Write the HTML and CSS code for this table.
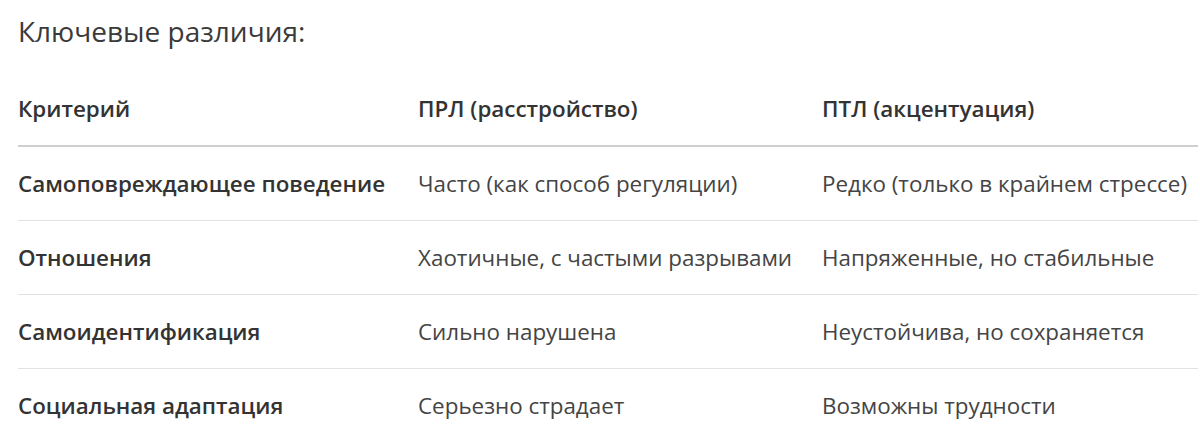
FILE: index.html
```html
<!DOCTYPE html>
<html lang="ru">
<head>
<meta charset="utf-8">
<link rel="stylesheet" href="styles.css">
</head>
<body>
<main class="content">
  <h3 class="title">Ключевые различия:</h3>
  <table class="diff">
    <thead>
      <tr><th>Критерий</th><th>ПРЛ (расстройство)</th><th>ПТЛ (акцентуация)</th></tr>
    </thead>
    <tbody>
      <tr><td class="crit">Самоповреждающее поведение</td><td>Часто (как способ регуляции)</td><td>Редко (только в крайнем стрессе)</td></tr>
      <tr><td class="crit">Отношения</td><td>Хаотичные, с частыми разрывами</td><td>Напряженные, но стабильные</td></tr>
      <tr><td class="crit">Самоидентификация</td><td>Сильно нарушена</td><td>Неустойчива, но сохраняется</td></tr>
      <tr><td class="crit">Социальная адаптация</td><td>Серьезно страдает</td><td>Возможны трудности</td></tr>
    </tbody>
  </table>
</main>
</body>
</html>
```
FILE: styles.css
```css
html, body {
  margin: 0;
  padding: 0;
  background: #ffffff;
}
body {
  font-family: "Open Sans", "Noto Sans", sans-serif;
  color: #404040;
}
.content {
  padding: 11px 2px 0 18px;
}
.title {
  margin: 0;
  font-size: 28px;
  font-weight: 500;
  color: #3a3a3a;
  line-height: 40px;
}
.diff {
  margin-top: 21px;
  width: 1180px;
  border-collapse: collapse;
  table-layout: fixed;
}
.diff th, .diff td {
  text-align: left;
  padding: 0 16px;
  font-size: 22.4px;
  vertical-align: middle;
  white-space: nowrap;
}
.diff th:first-child, .diff td:first-child {
  padding-left: 0;
  width: 368px;
}
.diff th:nth-child(2) {
  width: 372px;
}
.diff th {
  font-weight: 600;
  color: #333333;
  height: 73px;
  border-bottom: 2px solid #cfcfcf;
}
.diff td {
  height: 73px;
  border-bottom: 1px solid #e3e3e3;
  color: #444444;
}
.diff tbody tr:last-child td {
  border-bottom: none;
}
.diff td.crit {
  font-weight: 600;
  color: #333333;
}
```
